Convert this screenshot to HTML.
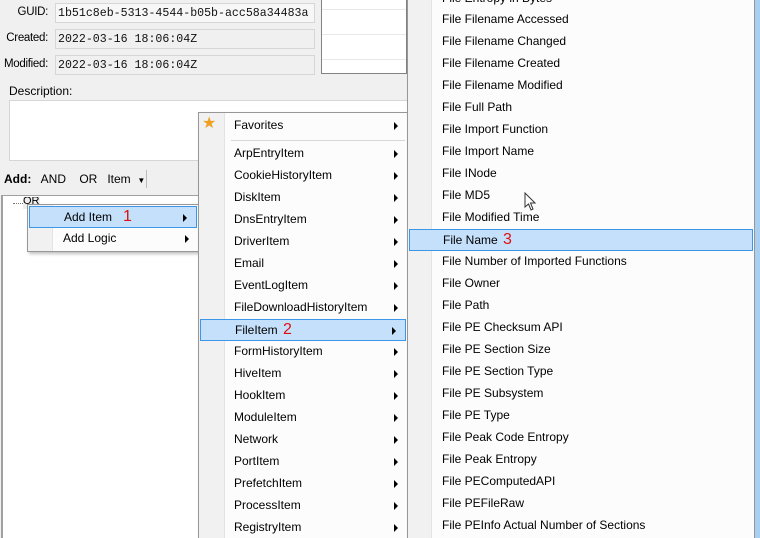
<!DOCTYPE html>
<html><head><style>
*{margin:0;padding:0;box-sizing:border-box}
html,body{overflow:hidden}
body{width:760px;height:538px;background:#f0f0f0;font-family:"Liberation Sans",sans-serif;font-size:12px;color:#000;position:relative}
.a{position:absolute;white-space:nowrap}
.fld{position:absolute;left:55px;width:260px;height:20px;background:#f0f0f0;border:1px solid #d6d6d6;font-family:"Liberation Mono",monospace;font-size:11.6px;padding:3px 2px;color:#111}
.lbl{position:absolute;width:48px;text-align:right;font-size:11.5px;letter-spacing:-0.3px}
.menu{position:absolute;background:#fcfcfc;border:1px solid #979797;box-shadow:2px 2px 3px rgba(0,0,0,.25)}
.gut{position:absolute;top:0;bottom:0;left:0;background:#f1f1f1;border-right:1px solid #e3e3e3}
.it{position:absolute;left:0;right:0;height:22px;line-height:20px}
.hl{background:#c4e0fb;border:1px solid #3d96e8}
.arr{position:absolute;right:9px;top:7px;width:0;height:0;border-top:4px solid transparent;border-bottom:4px solid transparent;border-left:4px solid #000}
.red{color:#e01010;font-size:16px;position:absolute}
</style></head><body>
<div class="lbl a" style="top:6px;left:0">GUID:</div>
<div class="lbl a" style="top:32px;left:0">Created:</div>
<div class="lbl a" style="top:58px;left:0">Modified:</div>
<div class="fld" style="top:3px;background:#f7f7f7">1b51c8eb-5313-4544-b05b-acc58a34483a</div>
<div class="fld" style="top:29px">2022-03-16 18:06:04Z</div>
<div class="fld" style="top:55px">2022-03-16 18:06:04Z</div>
<div class="a" style="left:321px;top:0;width:86px;height:74px;background:#fff;border:1px solid #828282;border-top:none;background-image:repeating-linear-gradient(#fff 0 9px,#e8e8e8 9px 10px,#fff 10px 25px)"></div>
<div class="a" style="left:9px;top:84px">Description:</div>
<div class="a" style="left:9px;top:100px;width:400px;height:61px;background:#fff;border:1px solid #d6d6d6"></div>
<div class="a" style="left:4px;top:172px"><b>Add:</b>&nbsp;&nbsp; AND &nbsp;&nbsp; OR &nbsp;&nbsp;Item &nbsp;<span style="font-size:8px">▼</span></div>
<div class="a" style="left:146px;top:170px;width:1px;height:18px;background:#bbb"></div>
<div class="a" style="left:1px;top:195px;width:410px;height:343px;background:#fff;border-left:2px solid #a0a0a0;border-top:1px solid #a0a0a0"></div>
<div class="a" style="left:13px;top:203px;width:10px;border-top:1px dotted #777"></div>
<div class="a" style="left:23px;top:197px;width:17px;height:12px;background:#eee;font-size:11px;line-height:8px;overflow:hidden">OR</div>

<div class="menu" style="left:27px;top:204px;width:172px;height:48px">
<div class="gut" style="width:25px"></div>
<div class="it hl" style="top:1px;left:1px;right:1px"><span class="a" style="left:34px">Add Item</span><span class="red" style="left:93px;top:0">1</span><div class="arr"></div></div>
<div class="it" style="top:23px"><span class="a" style="left:35px">Add Logic</span><div class="arr"></div></div>
</div>

<div class="menu" style="left:198px;top:112px;width:210px;height:430px">
<div class="gut" style="width:26px"></div>
<div class="it" style="top:2px"><span class="a" style="left:3px;top:-1px;color:#f0a020;font-size:16px">★</span><span class="a" style="left:35px">Favorites</span><div class="arr"></div></div>
<div class="a" style="left:32px;right:2px;top:27px;height:1px;background:#d7d7d7"></div>
<div class="it" style="top:30px"><span class="a" style="left:35px">ArpEntryItem</span><div class="arr"></div></div>
<div class="it" style="top:52px"><span class="a" style="left:35px">CookieHistoryItem</span><div class="arr"></div></div>
<div class="it" style="top:74px"><span class="a" style="left:35px">DiskItem</span><div class="arr"></div></div>
<div class="it" style="top:96px"><span class="a" style="left:35px">DnsEntryItem</span><div class="arr"></div></div>
<div class="it" style="top:118px"><span class="a" style="left:35px">DriverItem</span><div class="arr"></div></div>
<div class="it" style="top:140px"><span class="a" style="left:35px">Email</span><div class="arr"></div></div>
<div class="it" style="top:162px"><span class="a" style="left:35px">EventLogItem</span><div class="arr"></div></div>
<div class="it" style="top:184px"><span class="a" style="left:35px">FileDownloadHistoryItem</span><div class="arr"></div></div>
<div class="it hl" style="top:206px;left:1px;right:1px"><span class="a" style="left:34px">FileItem</span><span class="red" style="left:82px;top:0">2</span><div class="arr"></div></div>
<div class="it" style="top:228px"><span class="a" style="left:35px">FormHistoryItem</span><div class="arr"></div></div>
<div class="it" style="top:250px"><span class="a" style="left:35px">HiveItem</span><div class="arr"></div></div>
<div class="it" style="top:272px"><span class="a" style="left:35px">HookItem</span><div class="arr"></div></div>
<div class="it" style="top:294px"><span class="a" style="left:35px">ModuleItem</span><div class="arr"></div></div>
<div class="it" style="top:316px"><span class="a" style="left:35px">Network</span><div class="arr"></div></div>
<div class="it" style="top:338px"><span class="a" style="left:35px">PortItem</span><div class="arr"></div></div>
<div class="it" style="top:360px"><span class="a" style="left:35px">PrefetchItem</span><div class="arr"></div></div>
<div class="it" style="top:382px"><span class="a" style="left:35px">ProcessItem</span><div class="arr"></div></div>
<div class="it" style="top:404px"><span class="a" style="left:35px">RegistryItem</span><div class="arr"></div></div>
</div>

<div class="menu" style="left:407px;top:-10px;width:348px;height:560px">
<div class="gut" style="width:24px"></div>
<div class="it" style="top:-3px"><span class="a" style="left:34px">File Entropy in Bytes</span></div>
<div class="it" style="top:18px"><span class="a" style="left:34px">File Filename Accessed</span></div>
<div class="it" style="top:40px"><span class="a" style="left:34px">File Filename Changed</span></div>
<div class="it" style="top:62px"><span class="a" style="left:34px">File Filename Created</span></div>
<div class="it" style="top:84px"><span class="a" style="left:34px">File Filename Modified</span></div>
<div class="it" style="top:106px"><span class="a" style="left:34px">File Full Path</span></div>
<div class="it" style="top:128px"><span class="a" style="left:34px">File Import Function</span></div>
<div class="it" style="top:150px"><span class="a" style="left:34px">File Import Name</span></div>
<div class="it" style="top:172px"><span class="a" style="left:34px">File INode</span></div>
<div class="it" style="top:194px"><span class="a" style="left:34px">File MD5</span></div>
<div class="it" style="top:216px"><span class="a" style="left:34px">File Modified Time</span></div>
<div class="it hl" style="top:238px;left:1px;right:1px"><span class="a" style="left:33px">File Name</span><span class="red" style="left:93px;top:0">3</span></div>
<div class="it" style="top:260px"><span class="a" style="left:34px">File Number of Imported Functions</span></div>
<div class="it" style="top:282px"><span class="a" style="left:34px">File Owner</span></div>
<div class="it" style="top:304px"><span class="a" style="left:34px">File Path</span></div>
<div class="it" style="top:326px"><span class="a" style="left:34px">File PE Checksum API</span></div>
<div class="it" style="top:348px"><span class="a" style="left:34px">File PE Section Size</span></div>
<div class="it" style="top:370px"><span class="a" style="left:34px">File PE Section Type</span></div>
<div class="it" style="top:392px"><span class="a" style="left:34px">File PE Subsystem</span></div>
<div class="it" style="top:414px"><span class="a" style="left:34px">File PE Type</span></div>
<div class="it" style="top:436px"><span class="a" style="left:34px">File Peak Code Entropy</span></div>
<div class="it" style="top:458px"><span class="a" style="left:34px">File Peak Entropy</span></div>
<div class="it" style="top:480px"><span class="a" style="left:34px">File PEComputedAPI</span></div>
<div class="it" style="top:502px"><span class="a" style="left:34px">File PEFileRaw</span></div>
<div class="it" style="top:524px"><span class="a" style="left:34px">File PEInfo Actual Number of Sections</span></div>
</div>
<div class="a" style="left:755px;top:0;width:5px;height:538px;background:#a9d0f2"></div>
<svg class="a" style="left:524px;top:192px" width="12" height="20" viewBox="0 0 12 20"><path d="M1 1 L1 15 L4.5 12 L7 18 L9 17 L6.5 11 L11 11 Z" fill="#fff" stroke="#333" stroke-width="1"/></svg>
</body></html>
